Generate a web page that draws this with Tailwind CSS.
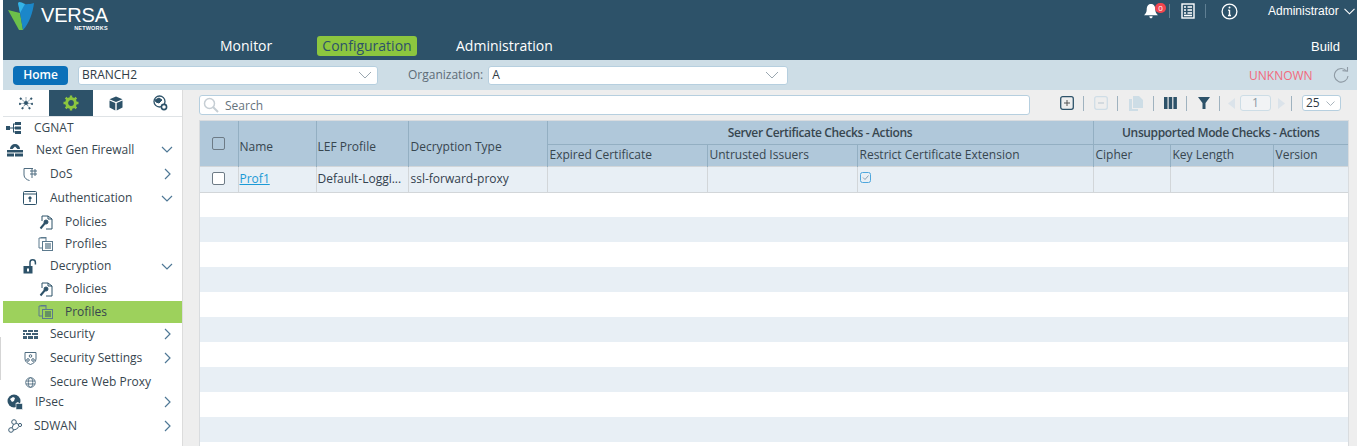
<!DOCTYPE html>
<html lang="en">
<head>
<meta charset="UTF-8">
<title>Versa Director</title>
<script src="https://cdn.jsdelivr.net/npm/@tailwindcss/browser@4"></script>
</head>
<body class="bg-white overflow-hidden font-['Open_Sans',sans-serif] text-[12px] text-[#33414e]">
<div class="w-[1357px] h-[446px] pl-[3px] flex flex-col overflow-hidden relative">
  <span class="absolute left-0 top-[337px] w-[1px] h-[43px] bg-[#d5d5d5]"></span>

  <!-- top bar -->
  <header class="h-[60px] bg-[#2d5269] relative shrink-0">
    <div class="absolute left-[5px] top-0 flex">
      <svg width="28" height="31" viewBox="0 0 28 31">
        <path d="M0 10 L12 13 L15 30 L11 30 Z" fill="#6cc04a"/>
        <path d="M10 3 C14 4 20 5 26 3 C25 12 21 24 15 30 L12 13 Z" fill="#1b87c9"/>
        <path d="M10 3 C11 1 13 2 17 4 L12 13 Z" fill="#35b4e6"/>
      </svg>
      <div class="ml-[5px] mt-[1px] text-white leading-none">
        <div class="font-['Liberation_Sans',sans-serif] text-[20px] tracking-[-0.2px] mt-[4px]">VERSA</div>
        <div class="font-['Liberation_Sans',sans-serif] font-bold text-[5.5px] text-right mt-[1px] tracking-[0.2px]">NETWORKS</div>
      </div>
    </div>

    <nav class="absolute left-[217px] top-[35px] flex items-center text-[14px] text-white">
      <span class="w-[97px]">Monitor</span>
      <span class="h-[20px] w-[100px] rounded-[3px] bg-[#8cc63f] text-[#2d5269] flex items-center justify-center">Configuration</span>
      <span class="ml-[39px]">Administration</span>
    </nav>
    <span class="absolute left-[1308px] top-[40px] text-white leading-none font-['Liberation_Sans',sans-serif] text-[13px]">Build</span>

    <div class="absolute top-0 left-[1141px] h-[22px] w-[214px] flex items-center text-white">
      <div class="relative w-[25px] h-[16px]">
        <svg width="16" height="17" viewBox="0 0 15 15" class="absolute top-0 -left-[1px]" fill="#fff"><path d="M7.5 0.5 C4.5 0.5 3.5 3 3.5 5.5 C3.5 8.5 2.5 9.5 1 11 L14 11 C12.5 9.5 11.5 8.5 11.5 5.5 C11.5 3 10.5 0.5 7.5 0.5 Z M6 12 L9 12 C9 14.5 6 14.5 6 12 Z"/></svg>
        <span class="absolute left-[11px] top-0 w-[11px] h-[10px] rounded-full bg-[#f0454f] text-[8px] leading-[10px] text-center">0</span>
      </div>
      <span class="w-px h-[14px] bg-[#5f7f93]"></span>
      <svg width="14" height="16" viewBox="0 0 14 16" class="ml-[11px]" fill="none" stroke="#fff"><rect x="1" y="1" width="12" height="14" stroke-width="1.4"/><path d="M3 4h2M3 7h2M3 10h2M6.5 4h4.5M6.5 7h4.5M6.5 10h4.5M3 12.5h8" stroke-width="1.3"/></svg>
      <span class="ml-[10px] w-px h-[14px] bg-[#5f7f93]"></span>
      <svg width="17" height="17" viewBox="0 0 17 17" class="ml-[15px]" fill="none" stroke="#fff"><circle cx="8.5" cy="8.5" r="7.4" stroke-width="1.3"/><path d="M8.5 7v5M7 12.5h3M7.2 7.2h1.3" stroke-width="1.4"/><circle cx="8.5" cy="4.6" r="1" fill="#fff" stroke="none"/></svg>
      <span class="ml-[30px] whitespace-nowrap font-['Liberation_Sans',sans-serif]">Administrator</span>
      <svg width="11" height="7" viewBox="0 0 11 7" class="ml-[5px]" fill="none" stroke="#fff" stroke-width="1.1"><path d="M0.5 0.8 L5.5 5.8 L10.5 0.8"/></svg>
    </div>
  </header>

  <!-- appliance bar -->
  <div class="h-[30px] shrink-0 bg-[#cddde6] flex items-center pl-[10px] relative">
    <span class="w-[55px] h-[19px] rounded-[4px] bg-[#0b70b9] text-white font-semibold flex items-center justify-center">Home</span>
    <div class="ml-[10px] w-[300px] h-[19px] rounded-[3px] bg-white border border-[#b6cfdf] flex items-center justify-between pl-[3px] pr-[5px] text-[#2f3b45]">
      BRANCH2
      <svg width="14" height="8" viewBox="0 0 14 8" fill="none" stroke="#9aa7b0"><path d="M1 1 L7 7 L13 1"/></svg>
    </div>
    <span class="ml-[30px] text-[#5e6c77]">Organization:</span>
    <div class="ml-[5px] w-[300px] h-[19px] rounded-[3px] bg-white border border-[#b6cfdf] flex items-center justify-between pl-[3px] pr-[8px] text-[#2f3b45]">
      A
      <svg width="14" height="8" viewBox="0 0 14 8" fill="none" stroke="#9aa7b0"><path d="M1 1 L7 7 L13 1"/></svg>
    </div>
    <span class="absolute left-[1246px] top-[10px] leading-none text-[#f2697c]">UNKNOWN</span>
    <svg width="16" height="16" viewBox="0 0 16 16" class="absolute left-[1330px] top-[7px]" fill="none" stroke="#8f9ba5" stroke-width="1.1"><path d="M13.5 4 A6.8 6.8 0 1 0 15 9"/><path d="M9.5 3.6 L14.5 4.2 L14.5 0" /></svg>
  </div>

  <div class="flex flex-1 min-h-0">
    <!-- sidebar -->
    <aside class="w-[180px] shrink-0 bg-white border-r border-[#dcdcdc] text-[#37464f]">
      <div class="h-[27px] flex border-b border-[#dfe3e6]">
        <div class="w-[46px] flex items-center justify-center">
          <svg width="14" height="14" viewBox="0 0 16 16" fill="#2d5269" stroke="#2d5269" stroke-width=".8"><path d="M8 8 L2 3 M8 8 L14 3 M8 8 L1 9 M8 8 L15 9 M8 8 L4 14 M8 8 L12 14 M8 8 L8 1" fill="none" stroke-dasharray="1.5 1"/><circle cx="8" cy="8" r="2"/><circle cx="2" cy="3" r=".9"/><circle cx="14" cy="3" r=".9"/><circle cx="1" cy="9" r=".9"/><circle cx="15" cy="9" r=".9"/><circle cx="4" cy="14" r=".9"/><circle cx="12" cy="14" r=".9"/></svg>
        </div>
        <div class="w-[44px] bg-[#2d5269] flex items-center justify-center">
          <svg width="16" height="16" viewBox="0 0 16 16" fill="none" stroke="#8cc63f"><circle cx="8" cy="8" r="4.4" stroke-width="3"/><path d="M8 0.5v3M8 12.5v3M0.5 8h3M12.5 8h3M2.7 2.7l2.1 2.1M11.2 11.2l2.1 2.1M2.7 13.3l2.1-2.1M11.2 4.8l2.1-2.1" stroke-width="2.4"/></svg>
        </div>
        <div class="w-[45px] flex items-center justify-center">
          <svg width="14" height="15" viewBox="0 0 14 15" fill="#2d5269"><path d="M7 0.5 L13.5 3.2 L7 6 L0.5 3.2 Z M0.5 4.5 L6.3 7 L6.3 14.5 L0.5 11.5 Z M13.5 4.5 L7.7 7 L7.7 14.5 L13.5 11.5 Z"/></svg>
        </div>
        <div class="w-[44px] flex items-center justify-center">
          <svg width="15" height="16" viewBox="0 0 15 16" fill="none" stroke="#2d5269"><circle cx="6.5" cy="6.5" r="5.5" stroke-width="1.3"/><path d="M2 5 L6 3 L9 5 L6 8 L3 7 Z" fill="#2d5269"/><circle cx="11" cy="12" r="2.6" fill="#fff" stroke-width="1.6"/></svg>
        </div>
      </div>
      <ul class="leading-none">
        <li class="h-[21px] flex items-center pl-[3px]">
          <svg width="16" height="12" viewBox="0 0 16 12" fill="#2d5269"><rect x="0" y="4" width="4" height="4"/><rect x="9" y="0" width="6" height="3"/><rect x="9" y="4.5" width="6" height="3"/><rect x="9" y="9" width="6" height="3"/><path d="M4 5.5h3V1.5h2v1H8v3h1v1H8v3h1v1H7V6.5H4z"/></svg>
          <span class="ml-[12px]">CGNAT</span>
        </li>
        <li class="h-[23px] flex items-center pl-[4px]">
          <svg width="16" height="15" viewBox="0 0 16 15" fill="#2d5269"><path d="M3 7 A5 5 0 0 1 13 7 L10.5 7 L8 4.5 L5.5 7 Z"/><path d="M0 8h16v2.5H0zM0 11.5h7v3H0zM8 11.5h8v3H8z"/></svg>
          <span class="ml-[13px]">Next Gen Firewall</span>
          <svg width="12" height="7" viewBox="0 0 12 7" class="ml-auto mr-[9px]" fill="none" stroke="#4f7896" stroke-width="1.2"><path d="M1 1 L6 6 L11 1"/></svg>
        </li>
        <li class="h-[25px] flex items-center pl-[20px]">
          <svg width="14" height="14" viewBox="0 0 14 14" fill="none" stroke="#4f6c80"><path d="M1 1.5H10M1 1.5V8C1 11 4 13 6.5 13.5M7 4h7M7 7h7M9 2V11M12 2V9"/></svg>
          <span class="ml-[13px]">DoS</span>
          <svg width="7" height="12" viewBox="0 0 7 12" class="ml-auto mr-[11px]" fill="none" stroke="#4f7896" stroke-width="1.2"><path d="M1 1 L6 6 L1 11"/></svg>
        </li>
        <li class="h-[24px] flex items-center pl-[20px]">
          <svg width="14" height="14" viewBox="0 0 14 14" fill="none" stroke="#2d5269"><rect x=".5" y=".5" width="13" height="13" rx="1"/><path d="M1 3h12"/><path d="M7 11V6M5.5 7.5L7 6l1.5 1.5" stroke-width="1.3"/></svg>
          <span class="ml-[13px]">Authentication</span>
          <svg width="12" height="7" viewBox="0 0 12 7" class="ml-auto mr-[9px]" fill="none" stroke="#4f7896" stroke-width="1.2"><path d="M1 1 L6 6 L11 1"/></svg>
        </li>
        <li class="h-[22px] flex items-center pl-[36px] pt-[2px]">
          <svg width="14" height="15" viewBox="0 0 14 15" fill="none" stroke="#2d5269"><path d="M3 6V1h6l4 3v10H7"/><path d="M9 1v3h4"/><circle cx="7" cy="7" r="2" fill="#2d5269"/><path d="M6 8 L1.5 13.5" stroke-width="2"/></svg>
          <span class="ml-[12px]">Policies</span>
        </li>
        <li class="h-[22px] flex items-center pl-[35px] pt-[2px]">
          <svg width="15" height="14" viewBox="0 0 15 14" fill="none" stroke="#5c7a8e"><path d="M4 11H1V1h7v3"/><path d="M2.5 0.5h6"/><rect x="4.5" y="4.5" width="10" height="9"/><path d="M7 7h6M7 9h6M7 11h6" stroke="#2d5269"/></svg>
          <span class="ml-[12px]">Profiles</span>
        </li>
        <li class="h-[22px] flex items-center pl-[20px] pt-[2px]">
          <svg width="15" height="15" viewBox="0 0 15 15" fill="none"><rect x="0.5" y="7" width="9" height="7.5" fill="#2d5269"/><path d="M7 7V3.5a2.7 2.7 0 0 1 5.4 0V5.5" stroke="#2d5269" stroke-width="1.5"/><rect x="4" y="9.5" width="2" height="3" fill="#fff"/></svg>
          <span class="ml-[12px]">Decryption</span>
          <svg width="12" height="7" viewBox="0 0 12 7" class="ml-auto mr-[9px]" fill="none" stroke="#4f7896" stroke-width="1.2"><path d="M1 1 L6 6 L11 1"/></svg>
        </li>
        <li class="h-[25px] flex items-center pl-[36px] pt-[1px]">
          <svg width="14" height="15" viewBox="0 0 14 15" fill="none" stroke="#2d5269"><path d="M3 6V1h6l4 3v10H7"/><path d="M9 1v3h4"/><circle cx="7" cy="7" r="2" fill="#2d5269"/><path d="M6 8 L1.5 13.5" stroke-width="2"/></svg>
          <span class="ml-[12px]">Policies</span>
        </li>
        <li class="h-[22px] flex items-center pl-[35px] bg-[#9dd15c]">
          <svg width="15" height="14" viewBox="0 0 15 14" fill="none" stroke="#5c7a8e"><path d="M4 11H1V1h7v3"/><path d="M2.5 0.5h6"/><rect x="4.5" y="4.5" width="10" height="9"/><path d="M7 7h6M7 9h6M7 11h6" stroke="#2d5269"/></svg>
          <span class="ml-[12px]">Profiles</span>
        </li>
        <li class="h-[22px] flex items-center pl-[20px]">
          <svg width="15" height="9" viewBox="0 0 15 9" fill="#3f5f75"><path d="M0 0h4v2H0zM5 0h5v2H5zM11 0h4v2h-4zM0 3h2v2H0zM3 3h5v2H3zM9 3h6v2H9zM0 6h4v3H0zM5 6h5v3H5zM11 6h4v3h-4z"/></svg>
          <span class="ml-[12px]">Security</span>
          <svg width="7" height="12" viewBox="0 0 7 12" class="ml-auto mr-[11px]" fill="none" stroke="#4f7896" stroke-width="1.2"><path d="M1 1 L6 6 L1 11"/></svg>
        </li>
        <li class="h-[24px] flex items-center pl-[21px] pt-[2px]">
          <svg width="13" height="14" viewBox="0 0 13 14" fill="none" stroke="#4f6c80"><path d="M1 1.5h11V8c0 3-3 4.5-5.5 5.5C4 12.5 1 11 1 8z"/><circle cx="6.5" cy="5" r="1.3"/><circle cx="4" cy="9" r="1.3"/><circle cx="9" cy="9" r="1.3"/></svg>
          <span class="ml-[13px]">Security Settings</span>
          <svg width="7" height="12" viewBox="0 0 7 12" class="ml-auto mr-[11px]" fill="none" stroke="#4f7896" stroke-width="1.2"><path d="M1 1 L6 6 L1 11"/></svg>
        </li>
        <li class="h-[24px] flex items-center pl-[22px] pt-[2px]">
          <svg width="11" height="11" viewBox="0 0 11 11" fill="none" stroke="#4f6c80" stroke-width=".9"><circle cx="5.5" cy="5.5" r="4.8"/><ellipse cx="5.5" cy="5.5" rx="2.2" ry="4.8"/><path d="M1 4h9M1 7h9"/></svg>
          <span class="ml-[14px] whitespace-nowrap">Secure Web Proxy</span>
        </li>
        <li class="h-[17px] flex items-center pl-[4px]">
          <svg width="16" height="16" viewBox="0 0 16 16" fill="#2d5269"><circle cx="7" cy="7" r="6.5"/><path d="M3 5l3-2 2 1-1 3-2 1zM9 9l2-1 1 1-2 2z" fill="#fff"/><rect x="9" y="9.5" width="6.5" height="6" fill="#2d5269" stroke="#fff" stroke-width=".6"/></svg>
          <span class="ml-[12px]">IPsec</span>
          <svg width="7" height="12" viewBox="0 0 7 12" class="ml-auto mr-[11px]" fill="none" stroke="#4f7896" stroke-width="1.2"><path d="M1 1 L6 6 L1 11"/></svg>
        </li>
        <li class="h-[30px] flex items-center pl-[5px] pt-[2px]">
          <svg width="14" height="14" viewBox="0 0 14 14" fill="none" stroke="#3f5f75"><circle cx="3" cy="11" r="2.3"/><circle cx="6" cy="3" r="2.3"/><circle cx="12" cy="6" r="1.6"/><path d="M4 9L5.5 5.3M8 4l2.500 1.300M5 11c3 0 5-2 6-3.500"/></svg>
          <span class="ml-[12px]">SDWAN</span>
          <svg width="7" height="12" viewBox="0 0 7 12" class="ml-auto mr-[11px]" fill="none" stroke="#4f7896" stroke-width="1.2"><path d="M1 1 L6 6 L1 11"/></svg>
        </li>
      </ul>
    </aside>

    <!-- main -->
    <main class="flex-1 min-w-0 bg-[#eeeeee] pl-[16px] flex flex-col">
      <div class="h-[30px] shrink-0 flex items-center relative">
        <div class="w-[831px] h-[20px] rounded-[3px] bg-white border border-[#b6cfdf] flex items-center pl-[3px] text-[#66737d]">
          <svg width="16" height="16" viewBox="0 0 16 16" fill="none" stroke="#c6ced4" stroke-width="1.5"><circle cx="6.5" cy="6.5" r="5"/><path d="M10 10 L15 15" stroke-width="2"/></svg>
          <span class="ml-[6px] pt-[2px]">Search</span>
        </div>
        <div class="absolute left-[861px] top-[4px] h-[18px] flex items-center">
          <svg width="14" height="14" viewBox="0 0 14 14" fill="none" stroke="#2d5269"><rect x=".7" y=".7" width="12.6" height="12.6" rx="2" stroke-width="1.3"/><path d="M4 7h6M7 4v6" stroke="#555"/></svg>
          <span class="ml-[9px] w-px h-[15px] bg-[#9fb2bf]"></span>
          <svg width="14" height="14" viewBox="0 0 14 14" class="ml-[10px]" fill="none" stroke="#cfdde6"><rect x=".7" y=".7" width="12.6" height="12.6" rx="2" stroke-width="1.3"/><path d="M4 7h6" stroke="#b8c6d0"/></svg>
          <span class="ml-[9px] w-px h-[15px] bg-[#9fb2bf]"></span>
          <svg width="14" height="15" viewBox="0 0 14 15" class="ml-[11px]" fill="#cddde6"><path d="M4 0h6l4 4v8H4z"/><path d="M0 3h3v10h6v2H0z"/></svg>
          <span class="ml-[10px] w-px h-[15px] bg-[#9fb2bf]"></span>
          <svg width="13" height="12" viewBox="0 0 13 12" class="ml-[10px]" fill="#2d5269"><path d="M0 0h3.5v12H0zM4.7 0h3.5v12H4.7zM9.4 0h3.5v12H9.4z"/></svg>
          <span class="ml-[9px] w-px h-[15px] bg-[#9fb2bf]"></span>
          <svg width="12" height="12" viewBox="0 0 12 12" class="ml-[11px]" fill="#2d5269"><path d="M0 0h12L7.5 6v6h-3V6z"/></svg>
          <span class="ml-[9px] w-px h-[15px] bg-[#9fb2bf]"></span>
          <svg width="7" height="11" viewBox="0 0 7 11" class="ml-[8px]" fill="#dbe3ea"><path d="M7 0v11L0 5.5z"/></svg>
          <span class="ml-[5px] w-[31px] h-[16px] rounded-[3px] bg-[#f1f3f5] border border-[#cddde6] text-[#8b98a2] flex items-center justify-center">1</span>
          <svg width="7" height="11" viewBox="0 0 7 11" class="ml-[7px]" fill="#dbe3ea"><path d="M0 0v11l7-5.5z"/></svg>
          <span class="ml-[6px] w-px h-[15px] bg-[#9fb2bf]"></span>
          <span class="ml-[10px] w-[39px] h-[16px] rounded-[3px] bg-white border border-[#b6cfdf] flex items-center pl-[3px] text-[#2f3b45] justify-between pr-[5px]">25<svg width="9" height="5" viewBox="0 0 9 5" fill="none" stroke="#aab5bd"><path d="M.5.5l4 4 4-4"/></svg></span>
        </div>
      </div>

      <div class="h-[326px] w-[1150px] bg-white border-x border-t border-[#d9dcdf] overflow-hidden">
        <table class="table-fixed border-collapse w-[1148px] leading-none">
          <colgroup>
            <col class="w-[38px]"><col class="w-[78px]"><col class="w-[92px]"><col class="w-[139px]"><col class="w-[160px]"><col class="w-[150px]"><col class="w-[236px]"><col class="w-[77px]"><col class="w-[103px]"><col class="w-[75px]">
          </colgroup>
          <thead class="bg-[#b0c8da] text-[#37464f]">
            <tr class="h-[23px]">
              <th rowspan="2" class="border-r border-[#93afc2] font-normal">
                <span class="block mx-auto w-[13px] h-[13px] rounded-[2px] border border-[#6d7b86]"></span>
              </th>
              <th rowspan="2" class="border-r border-[#93afc2] font-normal text-left pl-[1px] pt-[7px]">Name</th>
              <th rowspan="2" class="border-r border-[#93afc2] font-normal text-left pl-[1px] pt-[7px]">LEF Profile</th>
              <th rowspan="2" class="border-r border-[#93afc2] font-normal text-left pl-[2px] pt-[7px]">Decryption Type</th>
              <th colspan="3" class="border-r border-b border-[#93afc2] font-semibold tracking-[-0.36px] text-center pt-[2px]">Server Certificate Checks - Actions</th>
              <th colspan="3" class="border-b border-[#93afc2] font-semibold tracking-[-0.36px] text-center pt-[2px]">Unsupported Mode Checks - Actions</th>
            </tr>
            <tr class="h-[22px]">
              <th class="border-r border-[#93afc2] font-normal text-left pl-[2px]">Expired Certificate</th>
              <th class="border-r border-[#93afc2] font-normal text-left pl-[2px]">Untrusted Issuers</th>
              <th class="border-r border-[#93afc2] font-normal text-left pl-[2px]">Restrict Certificate Extension</th>
              <th class="border-r border-[#93afc2] font-normal text-left pl-[2px]">Cipher</th>
              <th class="border-r border-[#93afc2] font-normal text-left pl-[2px]">Key Length</th>
              <th class="font-normal text-left pl-[2px]">Version</th>
            </tr>
          </thead>
          <tbody>
            <tr class="h-[26px] bg-[#e8eff5] border-y border-[#d2d6d9]">
              <td class="border-r border-[#d2d6d9]"><span class="block mx-auto w-[13px] h-[13px] -mt-[1px] rounded-[2px] border border-[#6d7b86] bg-white"></span></td>
              <td class="border-r border-[#d2d6d9] pl-[1px]"><a class="text-[#1b9ad6] underline">Prof1</a></td>
              <td class="border-r border-[#d2d6d9] pl-[1px] whitespace-nowrap overflow-hidden">Default-Loggi...</td>
              <td class="border-r border-[#d2d6d9] pl-[2px]">ssl-forward-proxy</td>
              <td class="border-r border-[#d2d6d9]"></td>
              <td class="border-r border-[#d2d6d9]"></td>
              <td class="border-r border-[#d2d6d9] pl-[2px]">
                <svg width="11" height="11" viewBox="0 0 11 11" class="-mt-[3px]" fill="none"><rect x=".5" y=".5" width="10" height="10" rx="2" stroke="#4ea6dc"/><path d="M3 5.5l2 2 3.5-4" stroke="#8aa0b0"/></svg>
              </td>
              <td class="border-r border-[#d2d6d9]"></td>
              <td class="border-r border-[#d2d6d9]"></td>
              <td></td>
            </tr>
            <tr class="h-[25px]"><td colspan="10"></td></tr>
            <tr class="h-[25px] bg-[#e8eff5]"><td colspan="10"></td></tr>
            <tr class="h-[25px]"><td colspan="10"></td></tr>
            <tr class="h-[25px] bg-[#e8eff5]"><td colspan="10"></td></tr>
            <tr class="h-[25px]"><td colspan="10"></td></tr>
            <tr class="h-[25px] bg-[#e8eff5]"><td colspan="10"></td></tr>
            <tr class="h-[25px]"><td colspan="10"></td></tr>
            <tr class="h-[25px] bg-[#e8eff5]"><td colspan="10"></td></tr>
            <tr class="h-[25px]"><td colspan="10"></td></tr>
            <tr class="h-[25px] bg-[#e8eff5]"><td colspan="10"></td></tr>
          </tbody>
        </table>
      </div>
    </main>
  </div>
</div>
</body>
</html>
